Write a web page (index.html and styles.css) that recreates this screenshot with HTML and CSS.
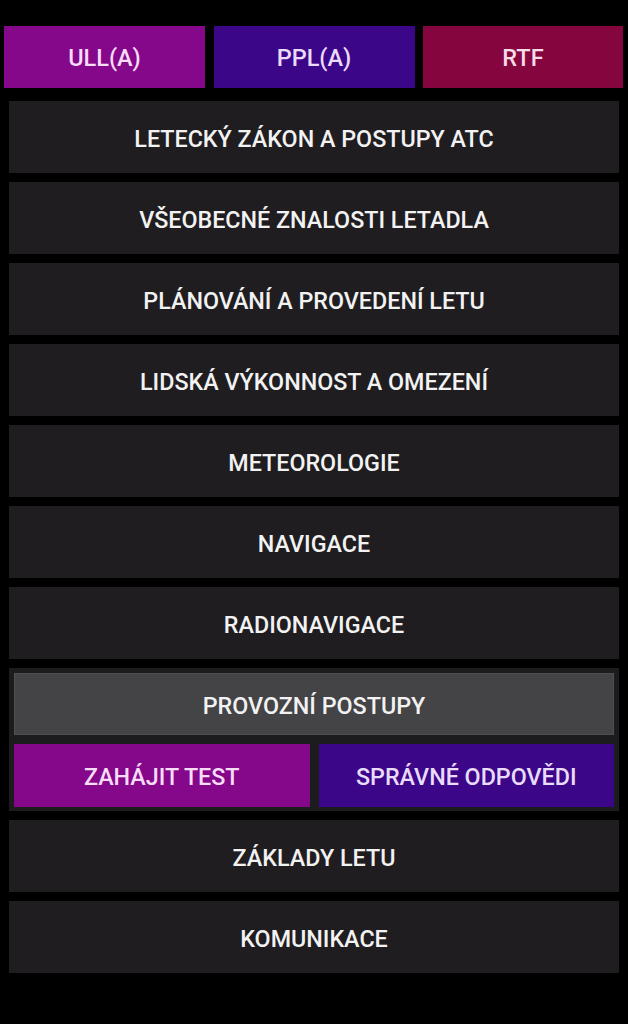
FILE: index.html
```html
<!DOCTYPE html>
<html lang="cs">
<head>
<meta charset="utf-8">
<title>Testy</title>
<link rel="stylesheet" href="styles.css">
</head>
<body>
<div class="tabs">
  <div class="tab tab-ull">ULL(A)</div>
  <div class="tab tab-ppl">PPL(A)</div>
  <div class="tab tab-rtf">RTF</div>
</div>
<div class="list">
  <div class="item">LETECKÝ ZÁKON A POSTUPY ATC</div>
  <div class="item">VŠEOBECNÉ ZNALOSTI LETADLA</div>
  <div class="item">PLÁNOVÁNÍ A PROVEDENÍ LETU</div>
  <div class="item">LIDSKÁ VÝKONNOST A OMEZENÍ</div>
  <div class="item">METEOROLOGIE</div>
  <div class="item">NAVIGACE</div>
  <div class="item">RADIONAVIGACE</div>
  <div class="group">
    <div class="group-head">PROVOZNÍ POSTUPY</div>
    <div class="group-actions">
      <div class="action action-start">ZAHÁJIT TEST</div>
      <div class="action action-answers">SPRÁVNÉ ODPOVĚDI</div>
    </div>
  </div>
  <div class="item">ZÁKLADY LETU</div>
  <div class="item">KOMUNIKACE</div>
</div>
</body>
</html>
```
FILE: styles.css
```css
html, body {
  margin: 0;
  padding: 0;
  background: #000;
}
body {
  font-family: Roboto, "Noto Sans", "Liberation Sans", sans-serif;
  font-weight: 500;
  color: #f2f2f2;
  width: 628px;
  min-height: 1024px;
}
.tabs {
  display: grid;
  grid-template-columns: 201px 201px 200px;
  column-gap: 8.5px;
  padding: 26px 5px 0 4px;
}
.tab {
  height: 62px;
  box-sizing: border-box;
  padding-top: 2px;
  display: flex;
  align-items: center;
  justify-content: center;
  font-size: 23.5px;
  color: #f6dcf6;
}
.tab-ull { background: #85078a; }
.tab-ppl { background: #3c0689; color: #e9dcfb; }
.tab-rtf { background: #85053f; color: #f6dce6; }

.list {
  display: flex;
  flex-direction: column;
  gap: 9px;
  padding: 13px 9px 0 9px;
}
.item {
  height: 72px;
  box-sizing: border-box;
  padding-top: 3px;
  background: #1f1d20;
  display: flex;
  align-items: center;
  justify-content: center;
  font-size: 23.3px;
}
.group {
  background: #1c1b1d;
  padding: 5px 5px 4px 5px;
  display: flex;
  flex-direction: column;
  gap: 9px;
}
.group-head {
  height: 62px;
  box-sizing: border-box;
  padding-top: 3px;
  background: #444345;
  border: 1px solid #4f4e50;
  display: flex;
  align-items: center;
  justify-content: center;
  font-size: 23.3px;
}
.group-actions {
  display: grid;
  grid-template-columns: 1fr 1fr;
  column-gap: 9px;
}
.action {
  height: 63px;
  box-sizing: border-box;
  padding-top: 3px;
  display: flex;
  align-items: center;
  justify-content: center;
  font-size: 23.3px;
}
.action-start { background: #85078a; color: #f6dcf6; }
.action-answers { background: #3c0689; color: #e9dcfb; }
```
